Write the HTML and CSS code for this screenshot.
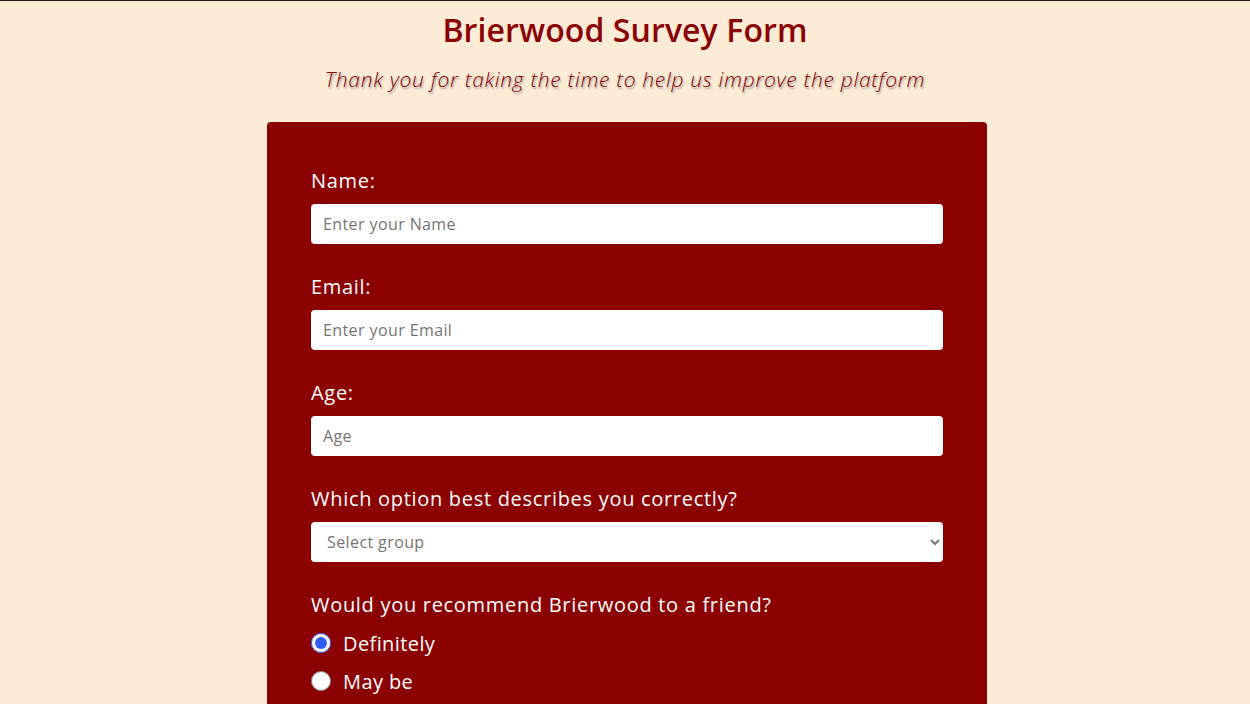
FILE: index.html
```html
<!DOCTYPE html>
<html lang="en">
<head>
<meta charset="utf-8">
<title>Brierwood Survey Form</title>
<link rel="stylesheet" href="styles.css">
</head>
<body>
<header class="page-header">
  <h1 class="title">Brierwood Survey Form</h1>
  <p class="subtitle">Thank you for taking the time to help us improve the platform</p>
</header>
<main class="wrap">
<form class="survey">
  <div class="group">
    <label class="label" for="name">Name:</label>
    <input class="field" id="name" type="text" placeholder="Enter your Name">
  </div>
  <div class="group">
    <label class="label" for="email">Email:</label>
    <input class="field" id="email" type="email" placeholder="Enter your Email">
  </div>
  <div class="group">
    <label class="label" for="age">Age:</label>
    <input class="field" id="age" type="number" placeholder="Age">
  </div>
  <div class="group">
    <label class="label" for="role">Which option best describes you correctly?</label>
    <select class="field select" id="role">
      <option>Select group</option>
      <option>Student</option>
      <option>Professional</option>
    </select>
  </div>
  <div class="group">
    <p class="label label-tight">Would you recommend Brierwood to a friend?</p>
    <label class="radio"><input type="radio" name="rec" checked><span>Definitely</span></label>
    <label class="radio"><input type="radio" name="rec"><span>May be</span></label>
    <label class="radio"><input type="radio" name="rec"><span>Not sure</span></label>
  </div>
</form>
</main>
</body>
</html>
```
FILE: styles.css
```css
html {
  border-top: 1px solid #1c1c1c;
}
body {
  margin: 0;
  background: #fcecd6;
  font-family: "Open Sans", "Liberation Sans", sans-serif;
  color: #fff;
}
.page-header {
  text-align: center;
  padding-top: 6px;
}
.title {
  margin: 0;
  color: #8b0000;
  font-size: 32px;
  font-weight: 600;
  line-height: 46px;
  letter-spacing: 0.1px;
}
.subtitle {
  margin: 11px 0 0;
  color: #8b0000;
  font-size: 21px;
  font-weight: 300;
  font-style: italic;
  line-height: 30px;
  letter-spacing: 0.7px;
  text-shadow: 1px 2px 2px #999;
}
.wrap {
  padding-left: 4px;
}
.survey {
  width: 720px;
  box-sizing: border-box;
  margin: 28px auto 0;
  padding: 44px;
  background: #8b0000;
  border-radius: 4px;
}
.group {
  margin-bottom: 28px;
}
.label {
  display: block;
  margin: 0 0 8px;
  font-size: 20px;
  line-height: 30px;
  letter-spacing: 0.7px;
}
.label-tight {
  margin-bottom: 4px;
}
.field {
  display: block;
  width: 100%;
  box-sizing: border-box;
  height: 40px;
  border: none;
  border-radius: 4px;
  padding: 0 12px;
  font-family: inherit;
  font-size: 16px;
  letter-spacing: 0.4px;
  color: #333;
  background: #fff;
}
.field::placeholder {
  color: #757575;
}
.select {
  padding-left: 12px;
  color: #757575;
}
.radio {
  display: flex;
  align-items: center;
  gap: 12px;
  height: 38px;
  font-size: 20px;
  letter-spacing: 0.4px;
}
.radio input {
  width: 20px;
  height: 20px;
  margin: 0;
  accent-color: #2f5cf6;
}
```
